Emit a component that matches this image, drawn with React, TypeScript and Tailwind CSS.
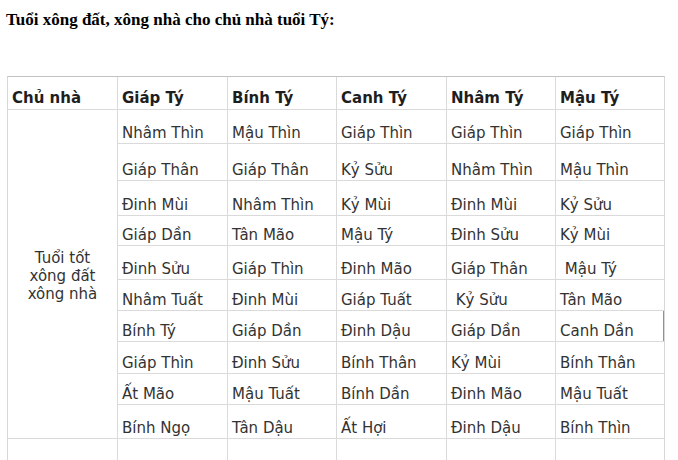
import * as React from "react";

const HEADERS = ["Chủ nhà", "Giáp Tý", "Bính Tý", "Canh Tý", "Nhâm Tý", "Mậu Tý"];

const ROWS: string[][] = [
  ["Nhâm Thìn", "Mậu Thìn", "Giáp Thìn", "Giáp Thìn", "Giáp Thìn"],
  ["Giáp Thân", "Giáp Thân", "Kỷ Sửu", "Nhâm Thìn", "Mậu Thìn"],
  ["Đinh Mùi", "Nhâm Thìn", "Kỷ Mùi", "Đinh Mùi", "Kỷ Sửu"],
  ["Giáp Dần", "Tân Mão", "Mậu Tý", "Đinh Sửu", "Kỷ Mùi"],
  ["Đinh Sửu", "Giáp Thìn", "Đinh Mão", "Giáp Thân", "\u00a0Mậu Tý"],
  ["Nhâm Tuất", "Đinh Mùi", "Giáp Tuất", "\u00a0Kỷ Sửu", "Tân Mão"],
  ["Bính Tý", "Giáp Dần", "Đinh Dậu", "Giáp Dần", "Canh Dần"],
  ["Giáp Thìn", "Đinh Sửu", "Bính Thân", "Kỷ Mùi", "Bính Thân"],
  ["Ất Mão", "Mậu Tuất", "Bính Dần", "Đinh Mão", "Mậu Tuất"],
  ["Bính Ngọ", "Tân Dậu", "Ất Hợi", "Đinh Dậu", "Bính Thìn"],
];

const cell = "bg-white flex items-end pl-[4px] pb-[1px] leading-[18px] whitespace-pre";

export default function App() {
  return (
    <div className="w-[678px] h-[460px] overflow-hidden bg-white" style={{ fontFamily: "'DejaVu Sans', Verdana, sans-serif" }}>
      <h1
        className="pt-[11px] pl-[6px] text-[17px] leading-[18px] font-bold text-black"
        style={{ fontFamily: "'Liberation Serif', 'Times New Roman', serif" }}
      >
        Tuổi xông đất, xông nhà cho chủ nhà tuổi Tý:
      </h1>

      <div className="mt-[47px] ml-[7px] w-[658px] grid grid-cols-[109px_109px_108px_109px_108px_108px] grid-rows-[32px_33px_36px_34px_29px_33px_30px_30px_31px_30px_33px_30px] gap-px bg-[#dadada] border-l border-r border-t border-l-[#d8d8d8] border-r-[#d8d8d8] border-t-[#c2c2c2] text-[15px] text-[#333]">
        {HEADERS.map((h) => (
          <div key={h} className={`${cell} pb-[2px] font-bold text-[#1e1e1e]`}>
            {h}
          </div>
        ))}

        <div className="col-start-1 row-start-2 row-span-10 bg-white flex items-center justify-center text-center leading-[18px] pt-[3px]">
          Tuổi tốt
          <br />
          xông đất
          <br />
          xông nhà
        </div>

        {ROWS.map((row, r) =>
          row.map((v, c) => (
            <div
              key={`${r}-${c}`}
              className={
                r === 6 && c === 4
                  ? `${cell} shadow-[inset_-1px_0_0_#6f97d0]`
                  : cell
              }
            >
              {v}
            </div>
          ))
        )}

        {[0, 1, 2, 3, 4, 5].map((i) => (
          <div key={`e${i}`} className="bg-white" />
        ))}
      </div>
    </div>
  );
}
